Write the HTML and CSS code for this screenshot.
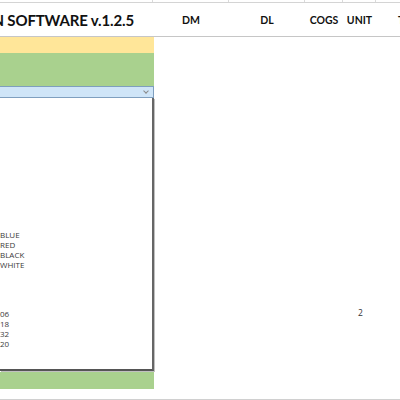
FILE: index.html
```html
<!DOCTYPE html>
<html lang="en">
<head>
    <meta charset="UTF-8">
    <title>Cost Calculation Software</title>
    <link rel="stylesheet" href="styles.css">
</head>
<body>
    <div class="sheet">
        <!-- top strip with column lines -->
        <div class="strip">
            <div></div><div></div><div></div><div></div><div></div><div></div>
        </div>

        <!-- header row -->
        <div class="header">
            <div class="title"><span>COST CALCULATION SOFTWARE v.1.2.5</span></div>
            <div class="col-label">DM</div>
            <div class="col-label">DL</div>
            <div class="col-label">COGS</div>
            <div class="col-label">UNIT</div>
            <div class="col-label last">TOTAL</div>
        </div>

        <div class="body">
            <div class="panel">
                <div class="band yellow"></div>
                <div class="band green"></div>
                <div class="combo"><span class="chevron"></span></div>
                <div class="dropdown">
                    <ul class="options colors">
                        <li>BLUE</li>
                        <li>RED</li>
                        <li>BLACK</li>
                        <li>WHITE</li>
                    </ul>
                    <ul class="options codes">
                        <li>06</li>
                        <li>18</li>
                        <li>32</li>
                        <li>20</li>
                    </ul>
                </div>
                <div class="band green bottom"></div>
            </div>
            <div class="cells">
                <div class="cell-unit">2</div>
            </div>
        </div>
    </div>
</body>
</html>
```

FILE: styles.css
```css
* {
    margin: 0;
    padding: 0;
    box-sizing: border-box;
}

body {
    font-family: Lato, "Open Sans", sans-serif;
    background-color: #fff;
    color: #222;
    overflow: hidden;
}

.sheet {
    width: 400px;
    height: 400px;
    overflow: hidden;
    display: flex;
    flex-direction: column;
    border-bottom: 1px solid #d0d0d0;
}

.strip,
.header {
    display: grid;
    grid-template-columns: 153px 76px 76px 38px 33px 64px;
}

.strip {
    height: 3px;
    border-bottom: 1px solid #d4d4d4;
}

.strip div {
    border-right: 1px solid #dadada;
}

.header {
    height: 34px;
    border-bottom: 1px solid #c6c6c6;
    align-items: center;
}

.title {
    overflow: hidden;
    white-space: nowrap;
    display: flex;
    justify-content: flex-end;
    padding-right: 19px;
    padding-top: 1px;
    font-weight: 700;
    font-size: 15px;
    letter-spacing: -0.15px;
    color: #111;
}

.col-label {
    text-align: center;
    font-weight: 700;
    font-size: 10.5px;
    color: #111;
    white-space: nowrap;
}

.col-label.last {
    text-align: left;
    padding-left: 22px;
}

.body {
    flex: 1;
    display: flex;
}

.panel {
    flex: none;
    width: 154px;
    display: flex;
    flex-direction: column;
}

.band {
    flex: none;
}

.yellow {
    height: 16px;
    background-color: #ffe699;
}

.green {
    height: 33px;
    background-color: #a9d18e;
}

.green.bottom {
    height: 17px;
}

.combo {
    height: 12px;
    background-color: #cfe5f8;
    border: 1px solid #7f9fbf;
    border-left: none;
    position: relative;
}

.chevron {
    position: absolute;
    right: 5px;
    top: 2px;
    width: 4px;
    height: 4px;
    border-right: 1px solid #8a8a8a;
    border-bottom: 1px solid #8a8a8a;
    transform: rotate(45deg);
}

.dropdown {
    height: 273px;
    background-color: #fff;
    border-right: 2px solid #666;
    border-bottom: 2px solid #555;
    box-shadow: 1px 1px 0 #c0c0c0;
    padding-top: 132px;
    margin-bottom: 1px;
}

.options {
    list-style: none;
    font-family: "Open Sans", sans-serif;
    font-size: 8px;
    line-height: 10px;
    color: #3b3b3b;
    padding-left: 0;
}

.codes {
    margin-top: 39px;
}

.cells {
    flex: 1;
    display: grid;
    grid-template-columns: 76px 76px 38px 33px 30px;
    align-content: start;
}

.cell-unit {
    grid-column: 4;
    text-align: center;
    margin-top: 271px;
    font-family: "Open Sans", sans-serif;
    font-size: 8.5px;
    line-height: 10px;
    color: #333;
}
```
